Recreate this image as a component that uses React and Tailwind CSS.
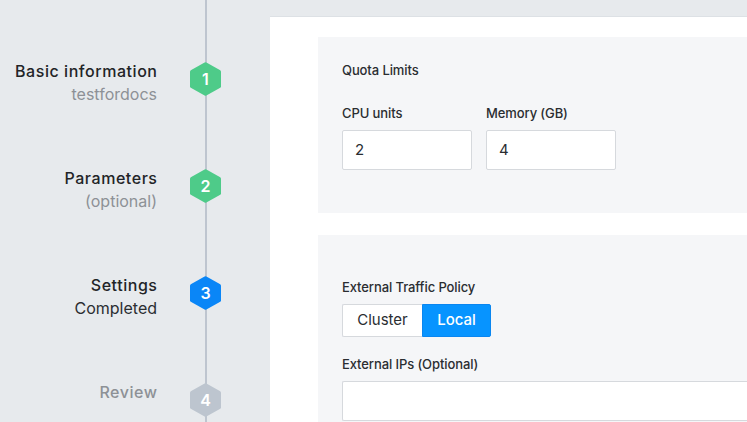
import React from "react";

const steps = [
  { n: 1, title: "Basic information", sub: "testfordocs", color: "#4ecb89", titleCls: "text-[#222427]", subCls: "text-[#8d9196]" },
  { n: 2, title: "Parameters", sub: "(optional)", color: "#4ecb89", titleCls: "text-[#222427]", subCls: "text-[#8d9196]" },
  { n: 3, title: "Settings", sub: "Completed", color: "#0a86f7", titleCls: "text-[#222427]", subCls: "text-[#2b2e32]" },
  { n: 4, title: "Review", sub: null, color: "#bdc5cf", titleCls: "text-[#8d9196]", subCls: "" },
];

function Hex({ color, n }) {
  return (
    <div className="relative w-[31px] h-[34px]">
      <svg width="31" height="34" viewBox="0 0 31 34" className="absolute inset-0">
        <path
          d="M14.6 0.4 Q15.5 0 16.4 0.4 L30.2 8.3 Q31 8.8 31 9.8 L31 24.2 Q31 25.2 30.2 25.7 L16.4 33.6 Q15.5 34 14.6 33.6 L0.8 25.7 Q0 25.2 0 24.2 L0 9.8 Q0 8.8 0.8 8.3 Z"
          fill={color}
        />
      </svg>
      <span className="relative flex w-full h-full items-center justify-center text-white text-[16px] font-semibold leading-none">
        {n}
      </span>
    </div>
  );
}

export default function App() {
  return (
    <div
      className="w-[747px] h-[422px] overflow-hidden flex bg-[#e7eaed]"
      style={{ fontFamily: "Inter, 'Open Sans', sans-serif" }}
    >
      {/* Sidebar */}
      <div className="relative w-[270px] shrink-0 pt-[59px]">
        <div className="absolute left-[205px] top-0 bottom-0 w-[2px] bg-[#bec5cf]" />
        {steps.map((s) => (
          <div key={s.n} className="relative flex h-[107px]">
            <div className="w-[157px] text-right mt-[1px]">
              <div className={`text-[16px] leading-[23px] font-medium tracking-[0.55px] mr-[-0.55px] ${s.titleCls}`}>{s.title}</div>
              {s.sub && <div className={`text-[16px] leading-[23px] ${s.subCls}`}>{s.sub}</div>}
            </div>
            <div className="ml-[33px] mt-[3px]">
              <Hex color={s.color} n={s.n} />
            </div>
          </div>
        ))}
      </div>

      {/* Main */}
      <div className="flex-1 pt-[16px]">
        <div className="h-full bg-white border-t border-[#dde1e5] pl-[48px] pt-[20px] flex flex-col gap-[22px]">
          <div className="h-[176px] bg-[#f5f6f8] pl-[24px] pt-[24px]">
            <div className="text-[13px] leading-[18px] font-medium tracking-[-0.1px] text-[#2a2d31]">Quota Limits</div>
            <div className="flex gap-[14px] mt-[25px]">
              <div className="flex flex-col gap-[8px]">
                <div className="text-[13px] leading-[18px] font-medium tracking-[-0.1px] text-[#2a2d31]">CPU units</div>
                <div className="w-[130px] h-[40px] bg-white border border-[#d6d9dd] rounded-[2px] flex items-center pl-[12px] text-[15px] text-[#2a2d31]">2</div>
              </div>
              <div className="flex flex-col gap-[8px]">
                <div className="text-[13px] leading-[18px] font-medium tracking-[-0.1px] text-[#2a2d31]">Memory (GB)</div>
                <div className="w-[130px] h-[40px] bg-white border border-[#d6d9dd] rounded-[2px] flex items-center pl-[12px] text-[15px] text-[#2a2d31]">4</div>
              </div>
            </div>
          </div>
          <div className="flex-1 bg-[#f5f6f8] pl-[24px] pt-[43px]">
            <div className="text-[13px] leading-[18px] font-medium tracking-[-0.1px] text-[#2a2d31]">External Traffic Policy</div>
            <div className="flex mt-[8px] h-[33px]">
              <div className="w-[80px] bg-white border border-[#d6d9dd] border-r-0 rounded-l-[2px] flex items-center justify-center text-[15px] text-[#2a2d31]">Cluster</div>
              <div className="w-[69px] bg-[#0794ff] border border-[#0a86f0] rounded-r-[2px] flex items-center justify-center text-[15px] font-medium text-white">Local</div>
            </div>
            <div className="mt-[18px] text-[13px] leading-[18px] font-medium tracking-[-0.1px] text-[#2a2d31]">External IPs (Optional)</div>
            <div className="mt-[8px] h-[40px] bg-white border border-[#d6d9dd] border-r-0 rounded-l-[2px]" />
          </div>
        </div>
      </div>
    </div>
  );
}
